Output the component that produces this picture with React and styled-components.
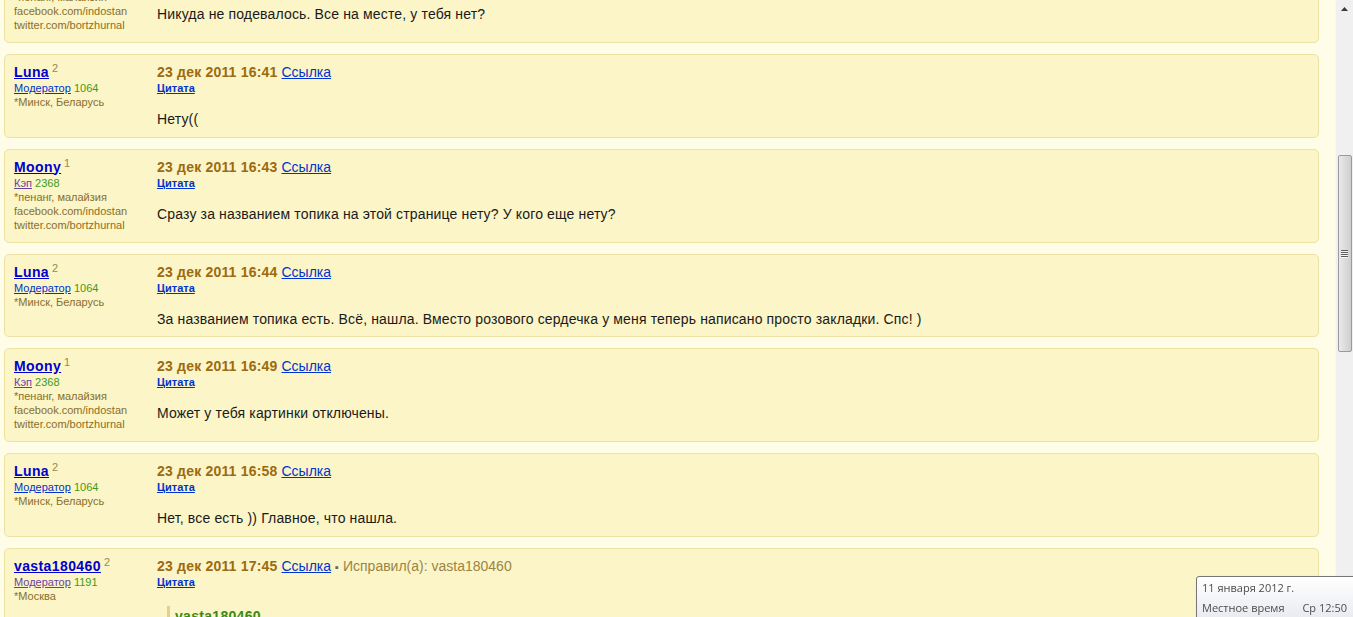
import React from "react";
import styled, { createGlobalStyle } from "styled-components";

const Global = createGlobalStyle`
  html, body { margin: 0; padding: 0; height: 617px; overflow: hidden; }
  body { background: #fffde8; font-family: "Liberation Sans", Arial, sans-serif; }
`;

const Page = styled.div`
  display: flex;
  height: 617px;
  overflow: hidden;
`;

const Content = styled.div`
  flex: 1;
  padding: 0 16px 0 4px;
  overflow: hidden;
`;

const List = styled.div`
  display: flex;
  flex-direction: column;
  gap: 11px;
  margin-top: -51px;
`;

const Post = styled.div`
  display: flex;
  background: #fbf5c8;
  border: 1px solid #ede1a3;
  border-radius: 5px;
  padding: 8px 9px ${(p) => (p.$short ? "9.5px" : "10px")} 9px;
`;

const Author = styled.div`
  width: 143px;
  flex-shrink: 0;
  display: flex;
  flex-direction: column;
`;

const NameRow = styled.div`
  height: 18px;
  line-height: 18px;
  white-space: nowrap;
`;

const Name = styled.a`
  font-weight: bold;
  font-size: 14px;
  letter-spacing: 0.4px;
  color: #0000cc;
  text-decoration: underline;
`;

const Sup = styled.sup`
  font-size: 11px;
  color: #9a8a4c;
  margin-left: 3px;
  vertical-align: 5px;
  line-height: 0;
`;

const Small = styled.div`
  font-size: 11px;
  line-height: 14px;
  height: 14px;
  color: #8a6f28;
  white-space: nowrap;
`;

const Role = styled.a`
  color: ${(p) => (p.$visited ? "#6b3fa0" : "#0033cc")};
  text-decoration: underline;
`;

const Count = styled.span`
  color: #3f9a1a;
`;

const Body = styled.div`
  flex: 1;
  display: flex;
  flex-direction: column;
`;

const Header = styled.div`
  height: 18px;
  line-height: 18px;
  font-size: 14px;
  white-space: nowrap;
`;

const Date = styled.span`
  font-weight: bold;
  letter-spacing: 0.2px;
  color: #9c6a10;
`;

const Link = styled.a`
  color: #0033cc;
  text-decoration: underline;
  margin-left: 4px;
`;

const Edited = styled.span`
  color: #9b8443;
`;

const Dot = styled.span`
  color: #666;
  margin: 0 4px;
  font-size: 11px;
`;

const Quote = styled.a`
  display: block;
  height: 14px;
  line-height: 14px;
  font-size: 11px;
  font-weight: bold;
  color: #0033cc;
  text-decoration: underline;
`;

const Message = styled.div`
  margin-top: 16px;
  font-size: 14px;
  letter-spacing: 0.15px;
  line-height: 16px;
  color: #1a1a1a;
`;

const Blockquote = styled.div`
  margin: 17px 0 0 10px;
  border-left: 3px solid #e3d08e;
  padding: 2px 0 4px 5px;
`;

const QuoteName = styled.div`
  font-weight: bold;
  font-size: 14px;
  letter-spacing: 0.3px;
  color: #3a8a14;
`;

const Scrollbar = styled.div`
  width: 17px;
  flex-shrink: 0;
  background: #f0f0f0;
  border-left: 1px solid #f7f7f7;
  display: flex;
  flex-direction: column;
  align-items: center;
`;

const Arrow = styled.div`
  height: 17px;
  display: flex;
  align-items: center;
  justify-content: center;
`;

const Track = styled.div`
  padding-top: 138px;
  width: 100%;
  display: flex;
  justify-content: center;
`;

const Thumb = styled.div`
  width: 14px;
  height: 197px;
  box-sizing: border-box;
  border: 1px solid #9a9a9a;
  border-radius: 2px;
  background: linear-gradient(to right, #e9e9e9, #dcdcdc 50%, #cfcfcf);
  display: flex;
  flex-direction: column;
  align-items: center;
  justify-content: center;
  gap: 1px;
`;

const Grip = styled.div`
  width: 7px;
  height: 1px;
  background: #5c5c5c;
  box-shadow: 0 1px 0 #f4f4f4;
`;

const Tooltip = styled.div`
  position: fixed;
  left: 1196px;
  top: 576px;
  width: 162px;
  height: 50px;
  box-sizing: border-box;
  border: 1px solid #767676;
  border-radius: 3px;
  background: linear-gradient(to bottom, #ffffff, #e6e7ef);
  box-shadow: 1px 1px 2px rgba(0, 0, 0, 0.25);
  font-family: "Open Sans", "DejaVu Sans", sans-serif;
  font-size: 11px;
  color: #4c4c4c;
  padding: 1px 6px 0 5px;
`;

const TipLine = styled.div`
  display: flex;
  justify-content: space-between;
  line-height: 20px;
  width: 145px;
`;

const moony = {
  name: "Moony",
  sup: 1,
  role: "Кэп",
  visited: true,
  count: "2368",
  lines: ["*пенанг, малайзия", "facebook.com/indostan", "twitter.com/bortzhurnal"],
};
const luna = {
  name: "Luna",
  sup: 2,
  role: "Модератор",
  count: "1064",
  short: true,
  lines: ["*Минск, Беларусь"],
};
const vasta = {
  name: "vasta180460",
  sup: 2,
  role: "Модератор",
  visited: true,
  count: "1191",
  lines: ["*Москва"],
};

const posts = [
  { a: moony, time: "23 дек 2011 16:39", text: "Никуда не подевалось. Все на месте, у тебя нет?" },
  { a: luna, time: "23 дек 2011 16:41", text: "Нету((" },
  { a: moony, time: "23 дек 2011 16:43", text: "Сразу за названием топика на этой странице нету? У кого еще нету?" },
  { a: luna, time: "23 дек 2011 16:44", text: "За названием топика есть. Всё, нашла. Вместо розового сердечка у меня теперь написано просто закладки. Спс! )" },
  { a: moony, time: "23 дек 2011 16:49", text: "Может у тебя картинки отключены." },
  { a: luna, time: "23 дек 2011 16:58", text: "Нет, все есть )) Главное, что нашла." },
  { a: vasta, time: "23 дек 2011 17:45", edited: "vasta180460", quote: "vasta180460" },
];

function PostItem({ p }) {
  const { a } = p;
  return (
    <Post $short={a.short}>
      <Author>
        <NameRow>
          <Name href="#">{a.name}</Name>
          <Sup>{a.sup}</Sup>
        </NameRow>
        <Small>
          <Role href="#" $visited={a.visited}>{a.role}</Role> <Count>{a.count}</Count>
        </Small>
        {a.lines.map((l) => (
          <Small key={l}>{l}</Small>
        ))}
      </Author>
      <Body>
        <Header>
          <Date>{p.time}</Date>
          <Link href="#">Ссылка</Link>
          {p.edited && (
            <>
              <Dot>▪</Dot>
              <Edited>Исправил(а): {p.edited}</Edited>
            </>
          )}
        </Header>
        <Quote href="#">Цитата</Quote>
        {p.text && <Message>{p.text}</Message>}
        {p.quote && (
          <Blockquote>
            <QuoteName>{p.quote}</QuoteName>
            <Message>Ты не видишь надпись «закладки» сразу под названием темы?</Message>
          </Blockquote>
        )}
      </Body>
    </Post>
  );
}

export default function App() {
  return (
    <Page>
      <Global />
      <Content>
        <List>
          {posts.map((p, i) => (
            <PostItem key={i} p={p} />
          ))}
        </List>
      </Content>
      <Scrollbar>
        <Arrow>
          <svg width="7" height="4" viewBox="0 0 7 4">
            <path d="M0 4 L3.5 0 L7 4 Z" fill="#3a3a3a" />
          </svg>
        </Arrow>
        <Track>
          <Thumb>
            <Grip />
            <Grip />
            <Grip />
            <Grip />
          </Thumb>
        </Track>
      </Scrollbar>
      <Tooltip>
        <TipLine>
          <span>11 января 2012 г.</span>
        </TipLine>
        <TipLine>
          <span>Местное время</span>
          <span>Ср 12:50</span>
        </TipLine>
      </Tooltip>
    </Page>
  );
}
